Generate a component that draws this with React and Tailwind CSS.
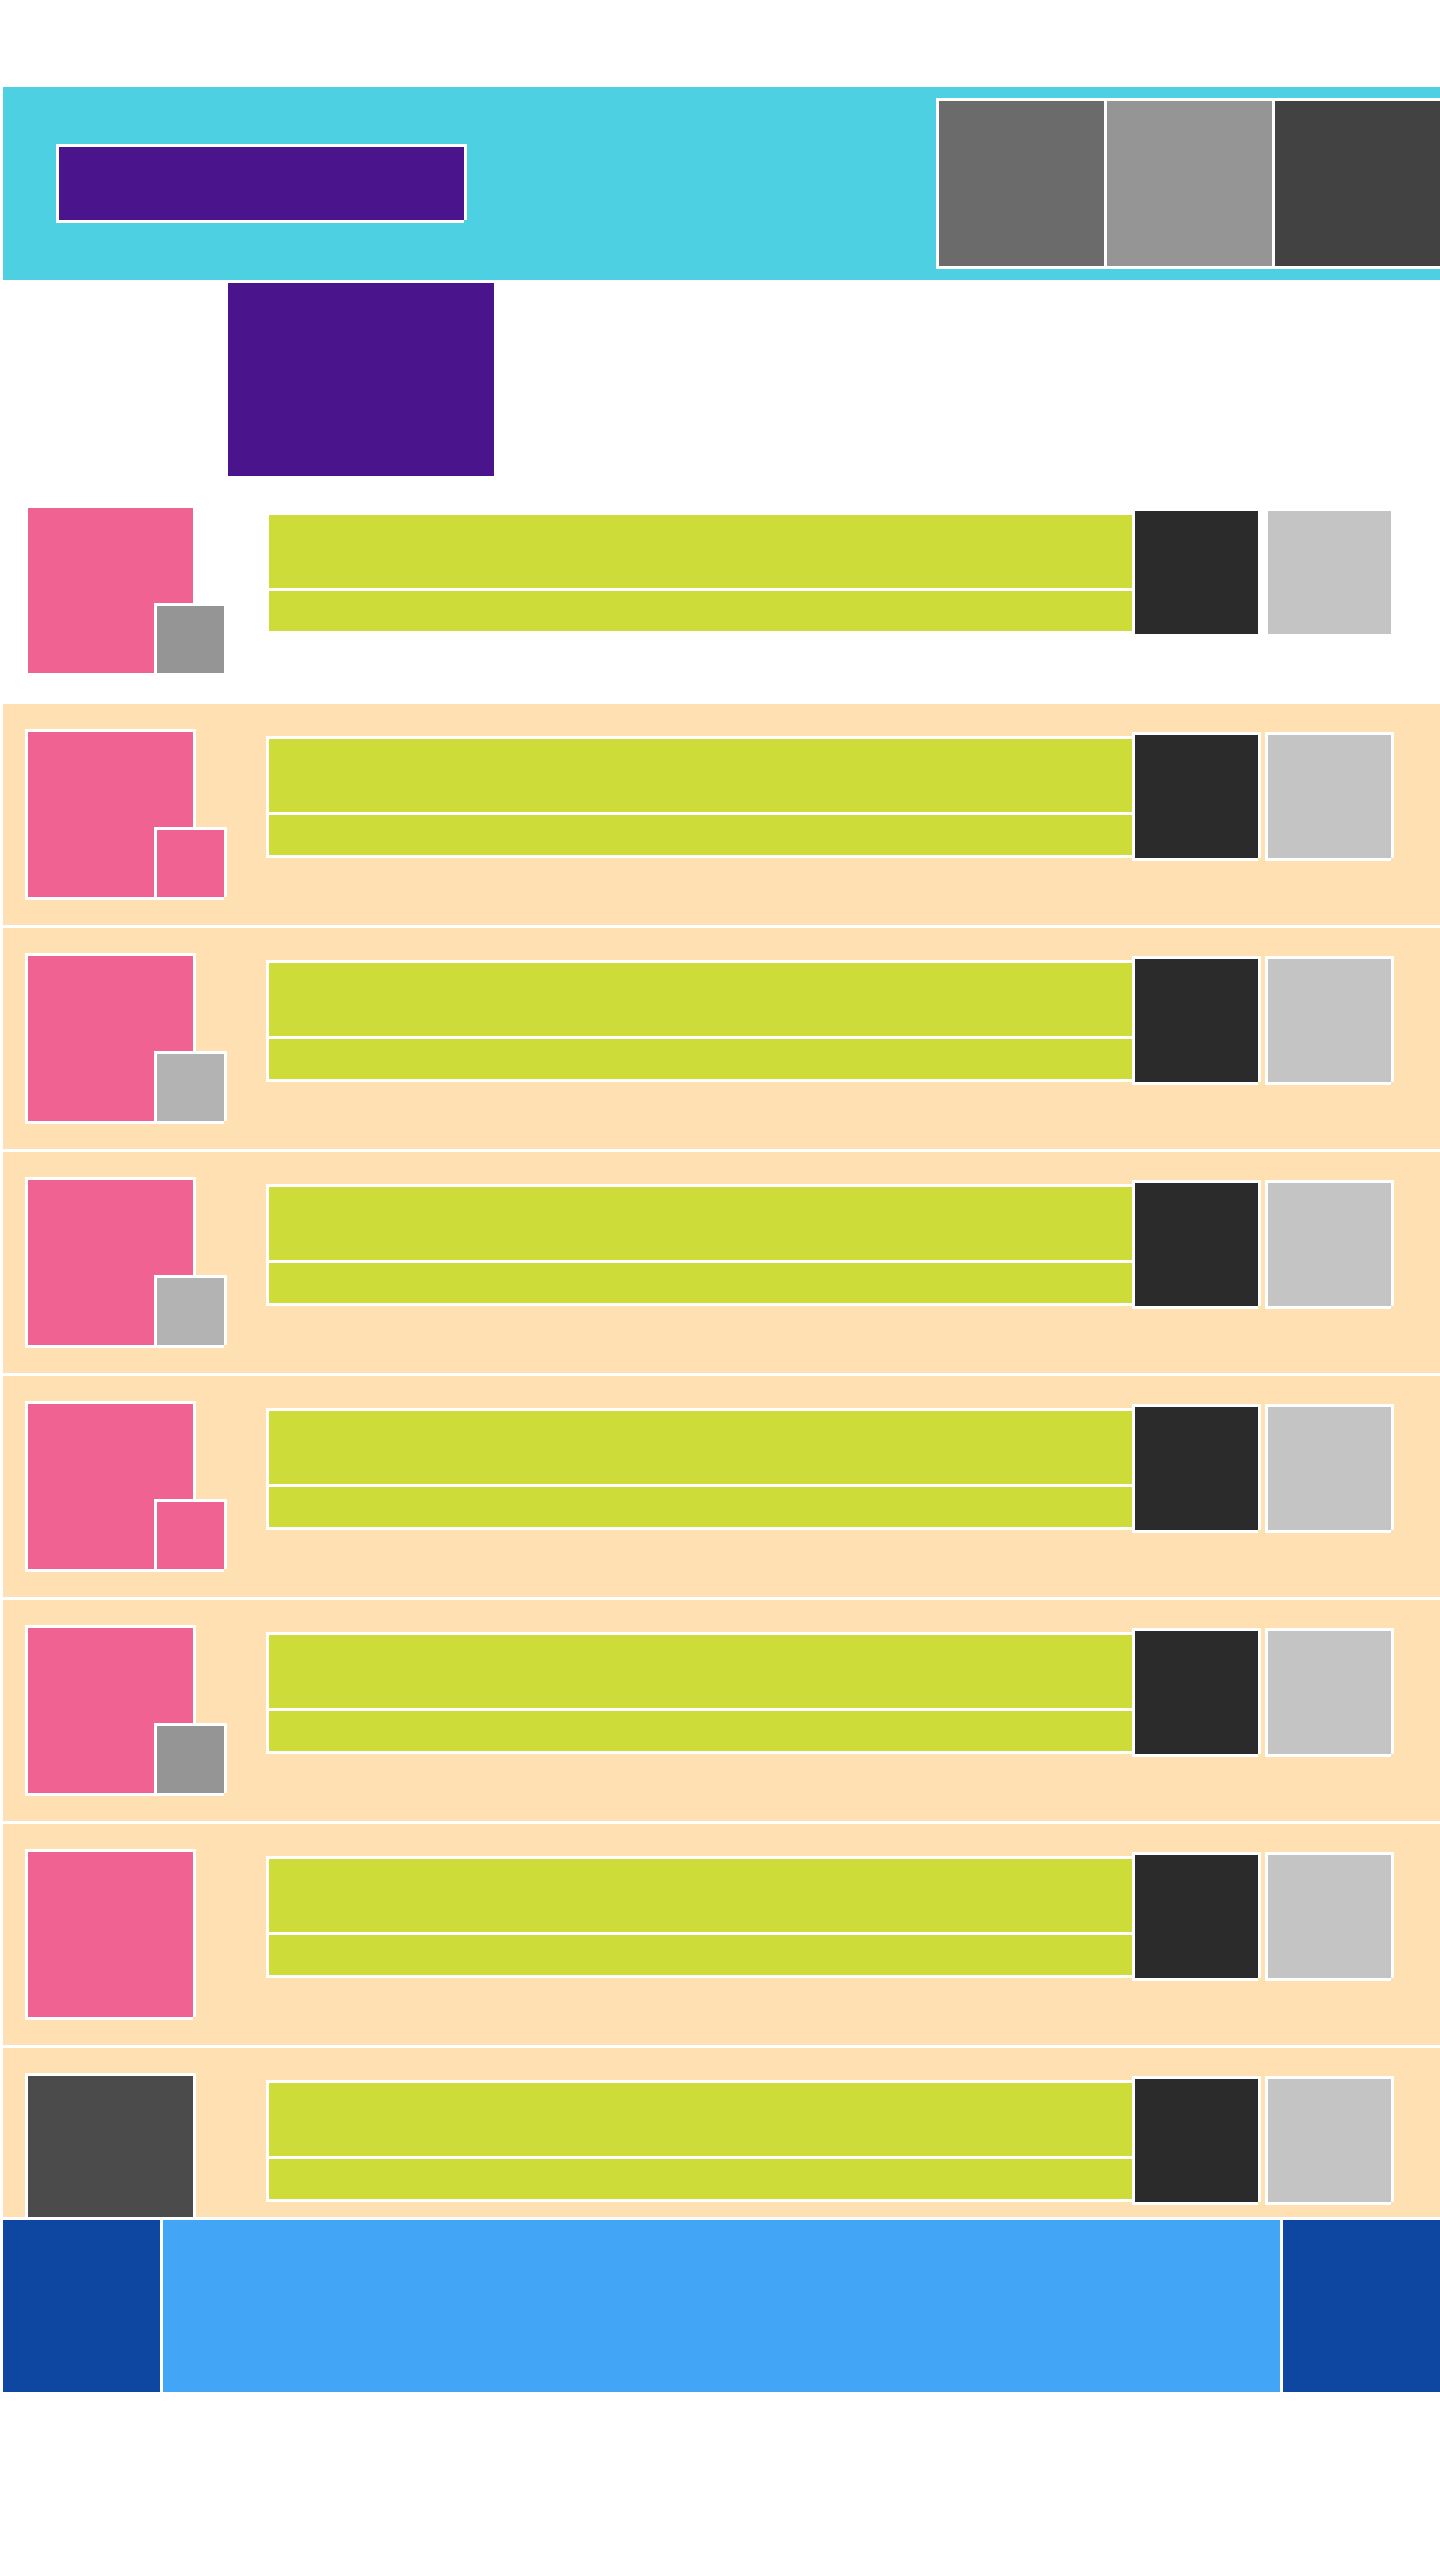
import React from 'react';

// white 3px frame: border on top/left, shadow on right/bottom (leaves the notched corner)
const frame = 'border-t-[3px] border-l-[3px] border-white shadow-[3px_0_0_#fff,0_3px_0_#fff]';

const rows = [
  { bg: 'bg-white', big: 'bg-[#f06292]', small: 'bg-[#959595]' },
  { bg: 'bg-[#ffe0b2]', big: 'bg-[#f06292]', small: 'bg-[#f06292]' },
  { bg: 'bg-[#ffe0b2]', big: 'bg-[#f06292]', small: 'bg-[#b3b3b3]' },
  { bg: 'bg-[#ffe0b2]', big: 'bg-[#f06292]', small: 'bg-[#b3b3b3]' },
  { bg: 'bg-[#ffe0b2]', big: 'bg-[#f06292]', small: 'bg-[#f06292]' },
  { bg: 'bg-[#ffe0b2]', big: 'bg-[#f06292]', small: 'bg-[#959595]' },
  { bg: 'bg-[#ffe0b2]', big: 'bg-[#f06292]', small: null },
  { bg: 'bg-[#ffe0b2]', big: 'bg-[#4b4b4b]', small: null },
];

function Row({ bg, big, small }) {
  return (
    <div className={`flex h-[224px] shrink-0 items-start border-t-[3px] border-white pl-[22px] pt-[25px] ${bg}`}>
      <div className={`relative h-[168px] w-[168px] shrink-0 ${frame} ${big}`}>
        {small && (
          <div className={`absolute left-[126px] top-[95px] h-[70px] w-[70px] ${frame} ${small}`} />
        )}
      </div>
      <div className="ml-[73px] mt-[7px] flex w-[866px] shrink-0 flex-col">
        <div className={`h-[76px] ${frame} bg-[#cddc39]`} />
        <div className={`h-[43px] ${frame} bg-[#cddc39]`} />
      </div>
      <div className={`mt-[3px] h-[126px] w-[126px] shrink-0 ${frame} bg-[#2b2b2b]`} />
      <div className={`ml-[7px] mt-[3px] h-[126px] w-[126px] shrink-0 ${frame} bg-[#c4c4c4]`} />
    </div>
  );
}

export default function App() {
  return (
    <div className="min-h-[2560px] w-[1440px] overflow-hidden bg-white pl-[3px]">
      <header className="mt-[87px] flex h-[193px] overflow-hidden bg-[#4dd0e1]">
        <div className={`ml-[53px] mt-[57px] h-[76px] w-[408px] shrink-0 ${frame} bg-[#4a148c]`} />
        <div className="ml-[472px] mt-[11px] flex shrink-0">
          <div className={`h-[168px] w-[168px] ${frame} bg-[#6b6b6b]`} />
          <div className={`h-[168px] w-[168px] ${frame} bg-[#959595]`} />
          <div className={`h-[168px] w-[180px] ${frame} bg-[#424242]`} />
        </div>
      </header>

      <div className={`ml-[222px] h-[196px] w-[269px] ${frame} bg-[#4a148c]`} />

      <div className="mt-px flex h-[1740px] flex-col overflow-hidden">
        {rows.map((r, i) => (
          <Row key={i} {...r} />
        ))}
      </div>

      <footer className="flex h-[175px] gap-[3px] border-t-[3px] border-white bg-white">
        <div className="w-[157px] shrink-0 bg-[#0d47a1]" />
        <div className="flex-1 bg-[#42a5f5]" />
        <div className="w-[157px] shrink-0 bg-[#0d47a1]" />
      </footer>
    </div>
  );
}
